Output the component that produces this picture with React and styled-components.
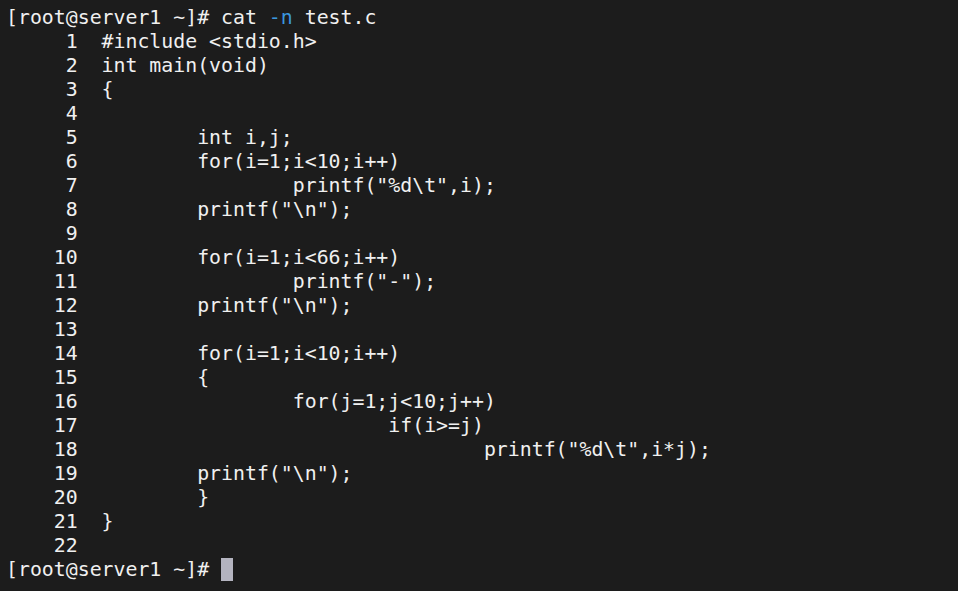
import styled, { createGlobalStyle } from "styled-components";

const GlobalStyle = createGlobalStyle`
  html, body {
    margin: 0;
    padding: 0;
    background: #1c1c1c;
  }
`;

const lines = [
  "#include <stdio.h>",
  "int main(void)",
  "{",
  "",
  "\tint i,j;",
  "\tfor(i=1;i<10;i++)",
  "\t\tprintf(\"%d\\t\",i);",
  "\tprintf(\"\\n\");",
  "",
  "\tfor(i=1;i<66;i++)",
  "\t\tprintf(\"-\");",
  "\tprintf(\"\\n\");",
  "",
  "\tfor(i=1;i<10;i++)",
  "\t{",
  "\t\tfor(j=1;j<10;j++)",
  "\t\t\tif(i>=j)",
  "\t\t\t\tprintf(\"%d\\t\",i*j);",
  "\tprintf(\"\\n\");",
  "\t}",
  "}",
  "",
];

const App = () => {
  return (
    <Terminal>
      <GlobalStyle />
      <Line>
        [root@server1 ~]# cat <Flag>-n</Flag> test.c
      </Line>
      {lines.map((text, i) => (
        <Line key={i}>
          {String(i + 1).padStart(6, " ") + "\t" + text}
        </Line>
      ))}
      <Line>
        [root@server1 ~]# <Cursor />
      </Line>
    </Terminal>
  );
};

export default App;

const Terminal = styled.div`
  width: 958px;
  height: 591px;
  box-sizing: border-box;
  padding: 6px 0 0 6px;
  background-color: #1c1c1c;
  color: #f0f0f0;
  font-family: "DejaVu Sans Mono", "Liberation Mono", monospace;
  font-size: 19.85px;
  overflow: hidden;
`;

const Line = styled.div`
  height: 24px;
  line-height: 24px;
  white-space: pre;
  tab-size: 8;
`;

const Flag = styled.span`
  color: #3a96dd;
`;

const Cursor = styled.span`
  display: inline-block;
  width: 12px;
  height: 23px;
  vertical-align: top;
  background-color: #b4b4c0;
`;
